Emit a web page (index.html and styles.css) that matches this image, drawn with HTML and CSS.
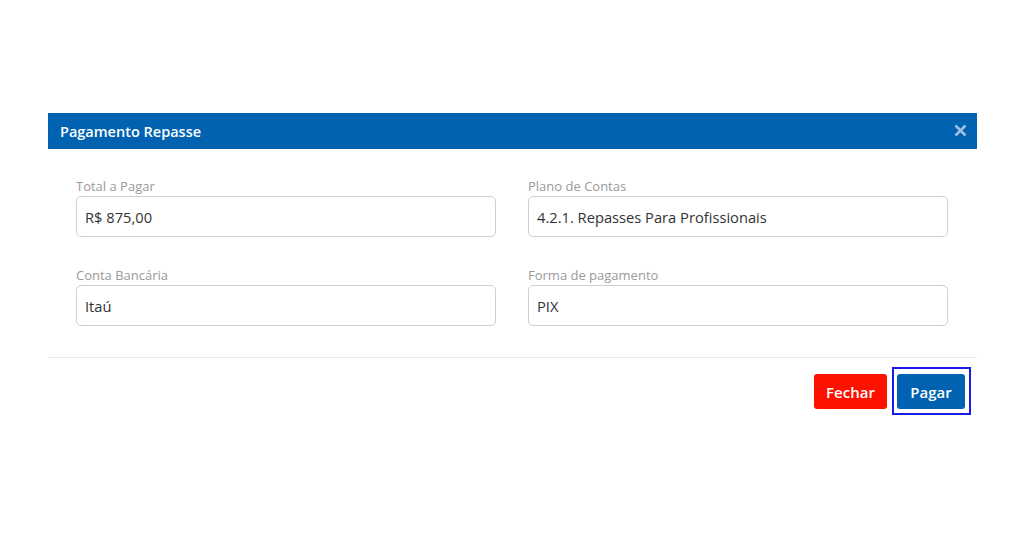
FILE: index.html
```html
<!DOCTYPE html>
<html lang="pt-BR">
<head>
<meta charset="utf-8">
<title>Pagamento Repasse</title>
<link rel="stylesheet" href="styles.css">
</head>
<body>
<div class="modal">
  <div class="modal-header">
    <span class="modal-title">Pagamento Repasse</span>
    <button class="close" aria-label="Fechar">
      <svg width="13" height="13" viewBox="0 0 13 13"><path d="M1.5 1.5 L11.5 11.5 M11.5 1.5 L1.5 11.5" stroke="currentColor" stroke-width="2.6" stroke-linecap="butt"/></svg>
    </button>
  </div>
  <div class="modal-body">
    <div class="field">
      <label class="label">Total a Pagar</label>
      <div class="input">R$ 875,00</div>
    </div>
    <div class="field">
      <label class="label">Plano de Contas</label>
      <div class="input">4.2.1. Repasses Para Profissionais</div>
    </div>
    <div class="field">
      <label class="label">Conta Bancária</label>
      <div class="input">Itaú</div>
    </div>
    <div class="field">
      <label class="label">Forma de pagamento</label>
      <div class="input">PIX</div>
    </div>
  </div>
  <div class="modal-footer">
    <button class="btn btn-danger">Fechar</button>
    <span class="focus-ring"><button class="btn btn-primary">Pagar</button></span>
  </div>
</div>
</body>
</html>
```
FILE: styles.css
```css
html, body {
  margin: 0;
  padding: 0;
  background: #ffffff;
  font-family: "Open Sans", "Noto Sans", "Liberation Sans", sans-serif;
}

.modal {
  width: 929px;
  margin: 113px 0 0 48px;
  background: #fff;
}

.modal-header {
  height: 36px;
  background: #0062b1;
  display: flex;
  align-items: center;
  justify-content: space-between;
  padding: 0 10px 0 12px;
  box-sizing: border-box;
}

.modal-title {
  color: #fff;
  font-size: 14.5px;
  font-weight: 600;
}

.close {
  background: none;
  border: 0;
  padding: 0;
  color: #9fbfe0;
  display: flex;
  align-items: center;
  margin-top: -1px;
}

.modal-body {
  display: grid;
  grid-template-columns: 420px 420px;
  column-gap: 32px;
  row-gap: 29px;
  padding: 28px 29px 31px 28px;
  border-bottom: 1px solid #e8e8e8;
}

.field {
  display: flex;
  flex-direction: column;
}

.label {
  color: #9a9a9a;
  font-size: 13px;
  line-height: 18px;
  height: 18px;
  margin-bottom: 1px;
}

.input {
  height: 41px;
  box-sizing: border-box;
  border: 1px solid #cfcfcf;
  border-radius: 5px;
  padding: 0 8px;
  display: flex;
  align-items: center;
  font-size: 14.7px;
  color: #333;
}

.modal-footer {
  display: flex;
  justify-content: flex-end;
  align-items: flex-start;
  gap: 10px;
  padding: 16px 12px 10px 0;
}

.btn {
  height: 35px;
  border: 0;
  border-radius: 3px;
  color: #fff;
  font-family: "Open Sans", "Noto Sans", "Liberation Sans", sans-serif;
  font-size: 15px;
  font-weight: 600;
  padding: 0 12px;
  display: block;
}

.btn-danger {
  background: #ff1100;
  width: 73px;
}

.btn-primary {
  background: #0062b1;
  width: 68px;
}

.focus-ring {
  display: block;
  border: 2px solid #1a1ae6;
  padding: 5px 4px 4px 3px;
  margin: -7px -6px -6px -5px;
}
```
